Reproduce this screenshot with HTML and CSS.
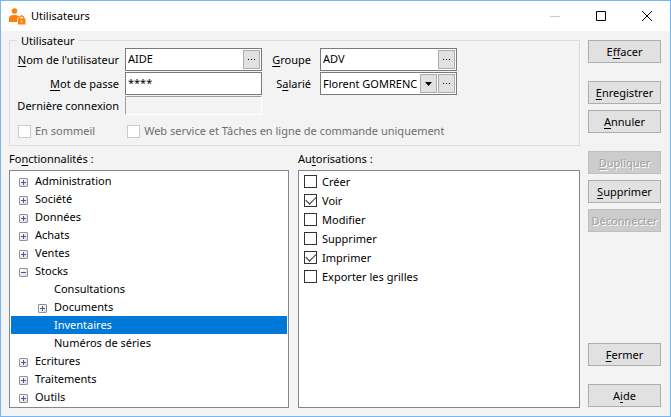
FILE: index.html
```html
<!DOCTYPE html>
<html lang="fr">
<head>
<meta charset="utf-8">
<meta name="viewport" content="width=device-width, initial-scale=1">
<title>Utilisateurs</title>
<link rel="stylesheet" href="styles.css">
</head>
<body>
<div class="window">
  <header class="titlebar">
    <svg class="app-icon" width="17" height="17" viewBox="0 0 17 17" aria-hidden="true">
      <circle cx="5.5" cy="3" r="2.800" fill="#ff7f0e"/>
      <path d="M0 14V10.500C0 8 1.500 7 5.500 7C8.500 7 9.800 7.800 10 8.800C8.800 9.600 8.300 10.500 8.300 12V14Z" fill="#ff7f0e"/>
      <path d="M10.500 11V10A2 2 0 0 1 14.700 10V11" fill="none" stroke="#ff7f0e" stroke-width="1.200"/>
      <path d="M9 10.500H16.500V16.500H9Z" fill="#ff7f0e"/>
      <path d="M12.200 12.500H13.200V14.500H12.200Z" fill="#fff"/>
    </svg>
    <h1 class="title">Utilisateurs</h1>
    <button class="caption" disabled aria-label="Réduire"><svg width="10" height="10" viewBox="0 0 10 10"><path d="M0 5.500H10" stroke="#ccc"/></svg></button>
    <button class="caption" aria-label="Agrandir"><svg width="10" height="10" viewBox="0 0 10 10"><path d="M.5.5H9.500V9.500H.5Z" fill="none" stroke="#000"/></svg></button>
    <button class="caption" aria-label="Fermer la fenêtre"><svg width="10" height="10" viewBox="0 0 10 10"><path d="M0 0L10 10M10 0L0 10" stroke="#000"/></svg></button>
  </header>
  <main class="content">
    <div class="main">
      <fieldset class="group">
        <legend>Utilisateur</legend>
        <div class="form">
          <label for="nom"><u>N</u>om de l'utilisateur</label>
          <div class="field"><input id="nom" type="text" value="AIDE"><button class="mini" aria-label="Parcourir les utilisateurs"><svg width="8" height="2" viewBox="0 0 8 2"><path d="M0 .5H1M3 .5H4M6 .5H7" stroke="#000"/></svg></button></div>
          <label for="groupe"><u>G</u>roupe</label>
          <div class="field"><input id="groupe" type="text" value="ADV"><button class="mini" aria-label="Parcourir les groupes"><svg width="8" height="2" viewBox="0 0 8 2"><path d="M0 .5H1M3 .5H4M6 .5H7" stroke="#000"/></svg></button></div>
          <label for="mdp"><u>M</u>ot de passe</label>
          <div class="field"><input id="mdp" type="text" value="****"></div>
          <label for="salarie">S<u>a</u>larié</label>
          <div class="field">
            <div class="combo">
              <select id="salarie"><option>Florent GOMRENC</option></select>
              <span class="mini arrow"><svg width="7" height="4" viewBox="0 0 7 4"><path d="M0 0H7L3.500 4Z"/></svg></span>
            </div>
            <button class="mini" aria-label="Parcourir les salariés"><svg width="8" height="2" viewBox="0 0 8 2"><path d="M0 .5H1M3 .5H4M6 .5H7" stroke="#000"/></svg></button>
          </div>
          <label for="connexion">Dernière connexion</label>
          <input id="connexion" class="sunken" type="text" disabled>
        </div>
        <div class="options">
          <label class="check"><input type="checkbox" disabled>En sommeil</label>
          <label class="check"><input type="checkbox" disabled>Web service et Tâches en ligne de commande uniquement</label>
        </div>
      </fieldset>
      <div class="panes">
        <section class="pane">
          <h2>Fo<u>n</u>ctionnalités :</h2>
          <ul class="list tree">
            <li><button class="toggle" aria-label="Développer"></button>Administration</li>
            <li><button class="toggle" aria-label="Développer"></button>Société</li>
            <li><button class="toggle" aria-label="Développer"></button>Données</li>
            <li><button class="toggle" aria-label="Développer"></button>Achats</li>
            <li><button class="toggle" aria-label="Développer"></button>Ventes</li>
            <li><button class="toggle open" aria-label="Réduire"></button>Stocks</li>
            <li class="child leaf">Consultations</li>
            <li class="child"><button class="toggle" aria-label="Développer"></button>Documents</li>
            <li class="child leaf selected">Inventaires</li>
            <li class="child leaf">Numéros de séries</li>
            <li><button class="toggle" aria-label="Développer"></button>Ecritures</li>
            <li><button class="toggle" aria-label="Développer"></button>Traitements</li>
            <li><button class="toggle" aria-label="Développer"></button>Outils</li>
          </ul>
        </section>
        <section class="pane">
          <h2>Au<u>t</u>orisations :</h2>
          <div class="list rights">
            <label class="check"><input type="checkbox">Créer</label>
            <label class="check"><input type="checkbox" checked>Voir</label>
            <label class="check"><input type="checkbox">Modifier</label>
            <label class="check"><input type="checkbox">Supprimer</label>
            <label class="check"><input type="checkbox" checked>Imprimer</label>
            <label class="check"><input type="checkbox">Exporter les grilles</label>
          </div>
        </section>
      </div>
    </div>
    <aside class="actions">
      <div class="stack"><button class="btn">E<u>f</u>facer</button></div>
      <div class="stack">
        <button class="btn"><u>E</u>nregistrer</button>
        <button class="btn"><u>A</u>nnuler</button>
      </div>
      <div class="stack">
        <button class="btn" disabled><u>D</u>upliquer</button>
        <button class="btn"><u>S</u>upprimer</button>
        <button class="btn" disabled>Déconnecter</button>
      </div>
      <div class="stack bottom"><button class="btn"><u>F</u>ermer</button></div>
      <div class="stack"><button class="btn">A<u>i</u>de</button></div>
    </aside>
  </main>
</div>
</body>
</html>
```
FILE: styles.css
```css
* { box-sizing: border-box; }

body {
  margin: 0;
  font: 11px/16px "Noto Sans", "Open Sans", sans-serif;
  color: #000;
}

button, input, select { font: inherit; color: inherit; margin: 0; }
svg { display: block; }
u { text-underline-offset: 2px; text-decoration-skip-ink: none; }

.window {
  min-height: 100vh;
  display: flex;
  flex-direction: column;
  border: 1px solid #79b5f3;
  background: #f3f3f3;
}

.titlebar {
  display: flex;
  align-items: center;
  height: 30px;
  padding-left: 8px;
  background: #fff;
}
.title { flex: 1; margin: 0 0 0 5px; font-size: 11px; font-weight: 400; }
.caption {
  display: grid;
  place-items: center;
  width: 46px;
  height: 30px;
  padding: 0;
  border: 0;
  background: none;
}

.content {
  flex: 1;
  display: flex;
  gap: 8px;
  padding: 2px 9px 8px 8px;
}
.main { flex: 1; min-width: 0; display: flex; flex-direction: column; }

.group {
  min-width: 0;
  margin: 0;
  padding: 0 8px 6px 5px;
  border: 1px solid #dcdcdc;
}
legend { margin-left: 2px; padding: 0 4px; line-height: 15px; }

.form {
  display: grid;
  grid-template-columns: 104px 137px 46px 137px;
  column-gap: 6px;
  row-gap: 1px;
  align-items: center;
}
.form label { text-align: right; white-space: nowrap; }
.form label:nth-of-type(even) { padding-right: 3px; }

.field {
  display: flex;
  gap: 1px;
  height: 23px;
  padding: 1px;
  border: 1px solid #7a7a7a;
  background: #fff;
}
.field input {
  flex: 1;
  min-width: 0;
  padding: 0 0 2px 1px;
  border: 0;
  background: none;
}
.mini {
  flex: none;
  display: grid;
  place-items: center;
  width: 17px;
  padding: 0;
  border: 1px solid #adadad;
  background: #e1e1e1;
}
.combo { position: relative; flex: 1; min-width: 0; }
.combo select {
  width: 100%;
  height: 100%;
  padding: 0 17px 0 1px;
  border: 0;
  background: none;
  appearance: none;
}
.arrow { position: absolute; top: 0; right: 0; bottom: 0; pointer-events: none; }
.sunken {
  width: 100%;
  height: 19px;
  border: 1px solid;
  border-color: #a0a0a0 #fff #fff #a0a0a0;
  background: #f3f3f3;
}

.options { display: flex; gap: 32px; padding: 8px 0 0 3px; color: #6d6d6d; }
.check { display: flex; align-items: center; gap: 5px; }
.check input {
  flex: none;
  width: 13px;
  height: 13px;
  border: 1px solid #333;
  background: #fff;
  appearance: none;
}
.check input:disabled { border-color: #ccc; }
.options .check { gap: 4px; }
.check input:checked::before {
  content: "";
  display: block;
  width: 9px;
  height: 5px;
  margin: 1px 0 0 1px;
  border: solid #333;
  border-width: 0 0 1px 1px;
  transform: rotate(-45deg);
}

.panes { flex: 1; display: grid; grid-template-columns: 280fr 282fr; gap: 9px; padding-top: 5px; }
.pane { min-width: 0; display: flex; flex-direction: column; gap: 3px; }
.pane h2 { margin: 0; font-size: 11px; font-weight: 400; }
.list {
  flex: 1;
  margin: 0;
  padding: 1px;
  border: 1px solid #828790;
  background: #fff;
  list-style: none;
}
.tree li {
  display: flex;
  align-items: center;
  gap: 7px;
  height: 18px;
  padding-left: 8px;
}
.tree .child { padding-left: 27px; }
.tree .leaf { padding-left: 43px; }
.tree .selected { background: #0078d7; color: #fff; }
.toggle {
  width: 9px;
  height: 9px;
  margin-top: 3px;
  padding: 0;
  border: 1px solid #919191;
  border-radius: 1px;
  background:
    linear-gradient(#4159a3, #4159a3) center / 5px 1px no-repeat,
    linear-gradient(#4159a3, #4159a3) center / 1px 5px no-repeat,
    linear-gradient(135deg, #fff, #ddd);
}
.toggle.open {
  background:
    linear-gradient(#4159a3, #4159a3) center / 5px 1px no-repeat,
    linear-gradient(135deg, #fff, #ddd);
}
.rights .check { height: 19px; padding-left: 4px; }

.actions {
  width: 73px;
  padding: 7px 0 1px;
  display: flex;
  flex-direction: column;
  gap: 18px;
}
.stack { display: flex; flex-direction: column; gap: 6px; }
.bottom { margin-top: auto; }
.btn {
  height: 23px;
  padding: 0;
  border: 1px solid #adadad;
  background: #e1e1e1;
  white-space: nowrap;
}
.btn:disabled {
  border-color: #bfbfbf;
  background: #ccc;
  color: #a0a0a0;
  text-shadow: 1px 1px #fff;
}
```
